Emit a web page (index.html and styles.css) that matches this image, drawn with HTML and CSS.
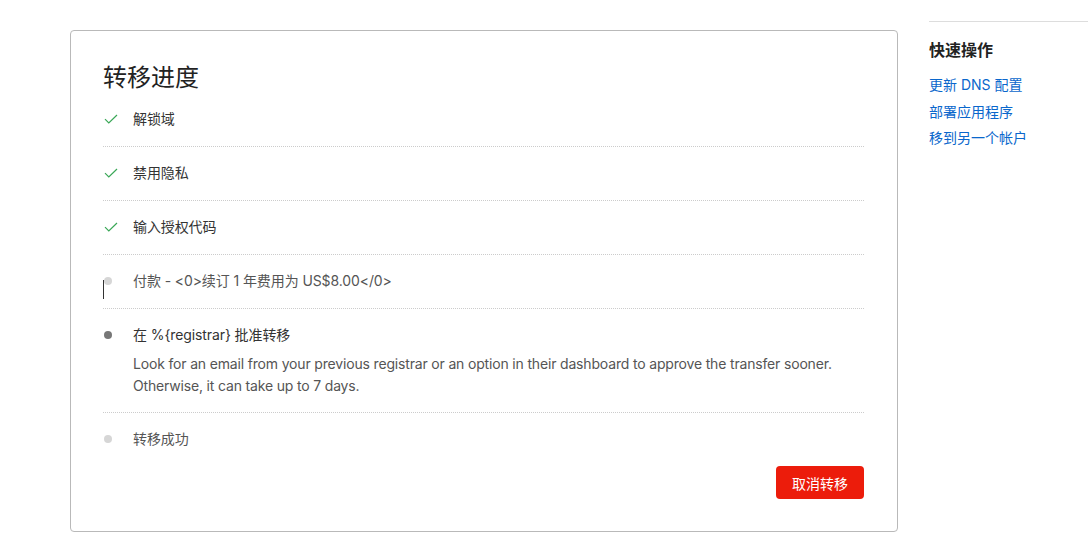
FILE: index.html
```html
<!DOCTYPE html>
<html lang="zh-CN">

<head>
    <meta charset="UTF-8">
    <meta name="viewport" content="width=device-width, initial-scale=1.0">
    <title>转移进度</title>
    <link rel="stylesheet" href="styles.css">
</head>

<body>
    <div class="page">
        <main class="card">
            <h1 class="card-title">转移进度</h1>

            <ul class="steps">
                <li class="step done">
                    <span class="step-icon">
                        <svg width="14" height="10" viewBox="0 0 14 10"><path d="M1 5.2 L4.8 9 L13 1" fill="none" stroke="#3aa757" stroke-width="1.2"/></svg>
                    </span>
                    <div class="step-body">
                        <p class="step-name">解锁域</p>
                    </div>
                </li>
                <li class="step done">
                    <span class="step-icon">
                        <svg width="14" height="10" viewBox="0 0 14 10"><path d="M1 5.2 L4.8 9 L13 1" fill="none" stroke="#3aa757" stroke-width="1.2"/></svg>
                    </span>
                    <div class="step-body">
                        <p class="step-name">禁用隐私</p>
                    </div>
                </li>
                <li class="step done">
                    <span class="step-icon">
                        <svg width="14" height="10" viewBox="0 0 14 10"><path d="M1 5.2 L4.8 9 L13 1" fill="none" stroke="#3aa757" stroke-width="1.2"/></svg>
                    </span>
                    <div class="step-body">
                        <p class="step-name">输入授权代码</p>
                    </div>
                </li>
                <li class="step pending">
                    <span class="step-icon"><i class="dot"></i><i class="caret"></i></span>
                    <div class="step-body">
                        <p class="step-name">付款 - &lt;0&gt;续订 1 年费用为 US$8.00&lt;/0&gt;</p>
                    </div>
                </li>
                <li class="step current">
                    <span class="step-icon"><i class="dot"></i></span>
                    <div class="step-body">
                        <p class="step-name">在 %{registrar} 批准转移</p>
                        <p class="step-desc">Look for an email from your previous registrar or an option in their dashboard to approve the transfer sooner. Otherwise, it can take up to 7 days.</p>
                    </div>
                </li>
                <li class="step pending">
                    <span class="step-icon"><i class="dot"></i></span>
                    <div class="step-body">
                        <p class="step-name">转移成功</p>
                    </div>
                </li>
            </ul>

            <div class="card-actions">
                <button class="btn-danger">取消转移</button>
            </div>
        </main>

        <aside class="sidebar">
            <h2 class="sidebar-title">快速操作</h2>
            <ul class="quick-links">
                <li><a href="#">更新 DNS 配置</a></li>
                <li><a href="#">部署应用程序</a></li>
                <li><a href="#">移到另一个帐户</a></li>
            </ul>
        </aside>
    </div>
</body>

</html>
```

FILE: styles.css
```css
* {
    margin: 0;
    padding: 0;
    list-style: none;
    box-sizing: border-box;
}

html,
body {
    width: 100%;
    height: 100%;
    background: #fff;
}

body {
    font-family: Inter, "Noto Sans CJK SC", sans-serif;
    font-size: 14px;
    color: #333;
}

.page {
    display: flex;
    gap: 31px;
    padding: 0 0 0 70px;
}

.card {
    width: 828px;
    margin-top: 30px;
    padding: 30px 33px 32px 32px;
    border: solid 1px #b9b9b9;
    border-radius: 4px;
}

.card-title {
    font-size: 24px;
    font-weight: 400;
    line-height: 34px;
    color: #222;
}

.steps {
    margin-top: -2px;
}

.step {
    display: flex;
    padding: 16px 0 17px;
    border-bottom: dotted 1px #ccc;
}

.step:last-child {
    border-bottom: none;
}

.step.current {
    padding-bottom: 15px;
}

.step-icon {
    width: 30px;
    height: 20px;
    flex-shrink: 0;
    position: relative;
    display: flex;
    align-items: center;
    padding-left: 1px;
}

.step-name {
    line-height: 20px;
    letter-spacing: -0.1px;
}

.step-desc {
    margin-top: 8px;
    line-height: 22px;
    color: #555;
    letter-spacing: -0.17px;
}

.dot {
    display: block;
    width: 8px;
    height: 8px;
    border-radius: 50%;
    background: #d6d6d6;
}

.current .dot {
    background: #777;
}

.pending .step-name {
    color: #555;
}

.caret {
    position: absolute;
    left: 0;
    top: 9px;
    width: 1px;
    height: 19px;
    background: #333;
}

.card-actions {
    display: flex;
    justify-content: flex-end;
}

.btn-danger {
    height: 33px;
    padding: 0 16px;
    border: none;
    border-radius: 4px;
    background: #ec1c0b;
    color: #fff;
    font-family: Inter, "Noto Sans CJK SC", sans-serif;
    font-size: 14px;
}

.sidebar {
    flex: 1;
    margin-top: 21px;
    border-top: solid 1px #ddd;
    padding-top: 16px;
}

.sidebar-title {
    font-size: 16px;
    font-weight: 600;
    line-height: 24px;
    color: #222;
}

.quick-links {
    margin-top: 13px;
}

.quick-links li {
    line-height: 20px;
    margin-bottom: 6.5px;
}

.quick-links a {
    color: #0a67cc;
    text-decoration: none;
}
```
